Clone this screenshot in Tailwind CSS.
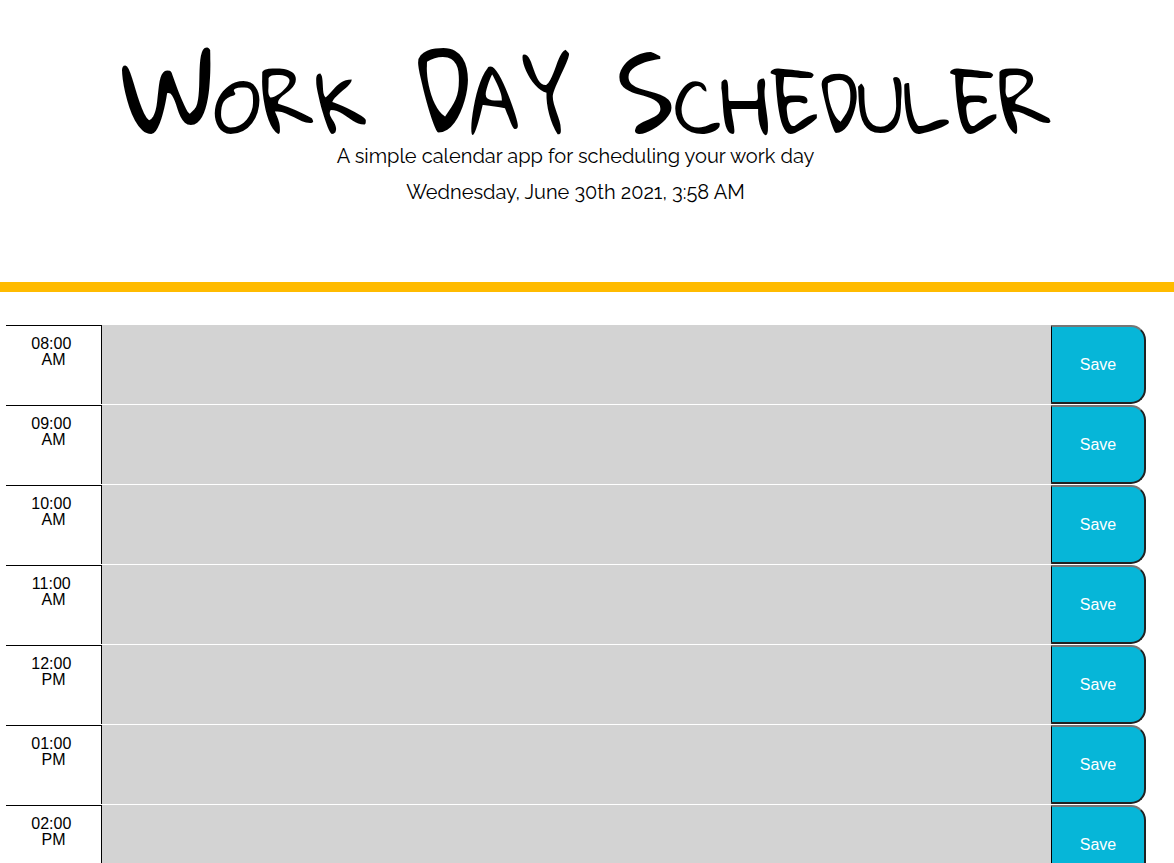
<!DOCTYPE html>
<html lang="en">
<head>
<meta charset="utf-8">
<meta name="viewport" content="width=device-width, initial-scale=1">
<title>Work Day Scheduler</title>
<script src="https://cdn.jsdelivr.net/npm/@tailwindcss/browser@4"></script>
</head>
<body class="bg-white font-['Liberation_Sans',Arial,sans-serif] text-base text-black">
<header class="border-b-10 border-[#ffbb00] pt-10 pb-18 text-center">
  <h1 class="font-['Rock_Salt','Gloria_Hallelujah',Lato,sans-serif] text-[108px] leading-[98px] font-normal whitespace-nowrap [font-variant:small-caps]">Work Day Scheduler</h1>
  <div class="pr-[23px] font-['Raleway',Lato,sans-serif] text-xl leading-9 font-normal">
    <p>A simple calendar app for scheduling your work day</p>
    <p>Wednesday, June 30th 2021, 3:58 AM</p>
  </div>
</header>
<main class="flex flex-col gap-px pt-[33px] pr-7 pl-1.5">
  <div class="flex h-[79px]">
    <label for="h08" class="w-24 shrink-0 border-t border-r border-black pt-2.5 text-center leading-4 whitespace-pre">08:00 
AM</label>
    <textarea id="h08" class="min-w-0 flex-1 resize-none bg-[#d3d3d3] p-2 outline-none"></textarea>
    <button type="button" class="w-[95px] shrink-0 rounded-r-[15px] border-2 border-l border-t-[#767676] border-r-[#212121] border-b-[#212121] border-l-black bg-[#06b6d8] text-white">Save</button>
  </div>
  <div class="flex h-[79px]">
    <label for="h09" class="w-24 shrink-0 border-t border-r border-black pt-2.5 text-center leading-4 whitespace-pre">09:00 
AM</label>
    <textarea id="h09" class="min-w-0 flex-1 resize-none bg-[#d3d3d3] p-2 outline-none"></textarea>
    <button type="button" class="w-[95px] shrink-0 rounded-r-[15px] border-2 border-l border-t-[#767676] border-r-[#212121] border-b-[#212121] border-l-black bg-[#06b6d8] text-white">Save</button>
  </div>
  <div class="flex h-[79px]">
    <label for="h10" class="w-24 shrink-0 border-t border-r border-black pt-2.5 text-center leading-4 whitespace-pre">10:00 
AM</label>
    <textarea id="h10" class="min-w-0 flex-1 resize-none bg-[#d3d3d3] p-2 outline-none"></textarea>
    <button type="button" class="w-[95px] shrink-0 rounded-r-[15px] border-2 border-l border-t-[#767676] border-r-[#212121] border-b-[#212121] border-l-black bg-[#06b6d8] text-white">Save</button>
  </div>
  <div class="flex h-[79px]">
    <label for="h11" class="w-24 shrink-0 border-t border-r border-black pt-2.5 text-center leading-4 whitespace-pre">11:00 
AM</label>
    <textarea id="h11" class="min-w-0 flex-1 resize-none bg-[#d3d3d3] p-2 outline-none"></textarea>
    <button type="button" class="w-[95px] shrink-0 rounded-r-[15px] border-2 border-l border-t-[#767676] border-r-[#212121] border-b-[#212121] border-l-black bg-[#06b6d8] text-white">Save</button>
  </div>
  <div class="flex h-[79px]">
    <label for="h12" class="w-24 shrink-0 border-t border-r border-black pt-2.5 text-center leading-4 whitespace-pre">12:00 
PM</label>
    <textarea id="h12" class="min-w-0 flex-1 resize-none bg-[#d3d3d3] p-2 outline-none"></textarea>
    <button type="button" class="w-[95px] shrink-0 rounded-r-[15px] border-2 border-l border-t-[#767676] border-r-[#212121] border-b-[#212121] border-l-black bg-[#06b6d8] text-white">Save</button>
  </div>
  <div class="flex h-[79px]">
    <label for="h13" class="w-24 shrink-0 border-t border-r border-black pt-2.5 text-center leading-4 whitespace-pre">01:00 
PM</label>
    <textarea id="h13" class="min-w-0 flex-1 resize-none bg-[#d3d3d3] p-2 outline-none"></textarea>
    <button type="button" class="w-[95px] shrink-0 rounded-r-[15px] border-2 border-l border-t-[#767676] border-r-[#212121] border-b-[#212121] border-l-black bg-[#06b6d8] text-white">Save</button>
  </div>
  <div class="flex h-[79px]">
    <label for="h14" class="w-24 shrink-0 border-t border-r border-black pt-2.5 text-center leading-4 whitespace-pre">02:00 
PM</label>
    <textarea id="h14" class="min-w-0 flex-1 resize-none bg-[#d3d3d3] p-2 outline-none"></textarea>
    <button type="button" class="w-[95px] shrink-0 rounded-r-[15px] border-2 border-l border-t-[#767676] border-r-[#212121] border-b-[#212121] border-l-black bg-[#06b6d8] text-white">Save</button>
  </div>
</main>
</body>
</html>
